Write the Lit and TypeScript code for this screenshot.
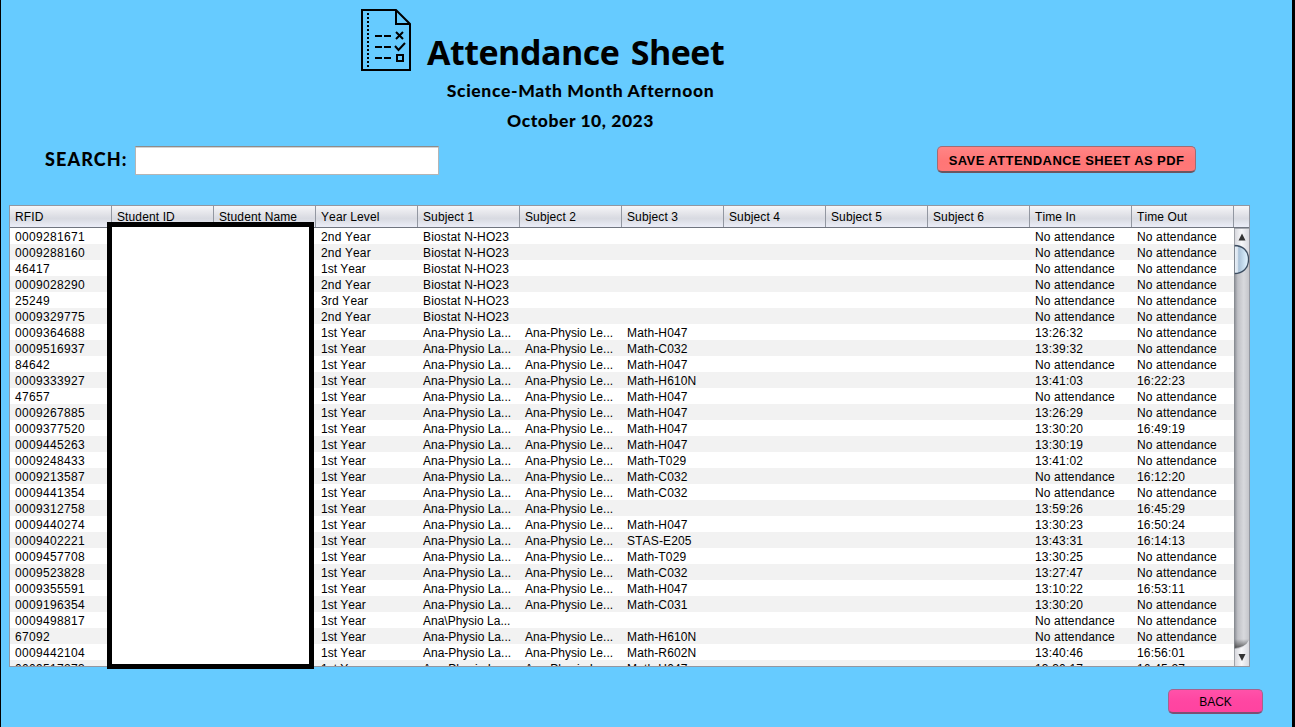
import { LitElement, html, css, svg } from "lit";
import { customElement } from "lit/decorators.js";

const N = "No attendance";
const LA = "Ana-Physio La...";
const LE = "Ana-Physio Le...";
const B = "Biostat N-HO23";

const HEADERS = ["RFID", "Student ID", "Student Name", "Year Level", "Subject 1", "Subject 2", "Subject 3", "Subject 4", "Subject 5", "Subject 6", "Time In", "Time Out"];

// rfid, year, subject 1, subject 2, subject 3, time in, time out
const ROWS: string[][] = [
  ["0009281671", "2nd Year", B, "", "", N, N],
  ["0009288160", "2nd Year", B, "", "", N, N],
  ["46417", "1st Year", B, "", "", N, N],
  ["0009028290", "2nd Year", B, "", "", N, N],
  ["25249", "3rd Year", B, "", "", N, N],
  ["0009329775", "2nd Year", B, "", "", N, N],
  ["0009364688", "1st Year", LA, LE, "Math-H047", "13:26:32", N],
  ["0009516937", "1st Year", LA, LE, "Math-C032", "13:39:32", N],
  ["84642", "1st Year", LA, LE, "Math-H047", N, N],
  ["0009333927", "1st Year", LA, LE, "Math-H610N", "13:41:03", "16:22:23"],
  ["47657", "1st Year", LA, LE, "Math-H047", N, N],
  ["0009267885", "1st Year", LA, LE, "Math-H047", "13:26:29", N],
  ["0009377520", "1st Year", LA, LE, "Math-H047", "13:30:20", "16:49:19"],
  ["0009445263", "1st Year", LA, LE, "Math-H047", "13:30:19", N],
  ["0009248433", "1st Year", LA, LE, "Math-T029", "13:41:02", N],
  ["0009213587", "1st Year", LA, LE, "Math-C032", N, "16:12:20"],
  ["0009441354", "1st Year", LA, LE, "Math-C032", N, N],
  ["0009312758", "1st Year", LA, LE, "", "13:59:26", "16:45:29"],
  ["0009440274", "1st Year", LA, LE, "Math-H047", "13:30:23", "16:50:24"],
  ["0009402221", "1st Year", LA, LE, "STAS-E205", "13:43:31", "16:14:13"],
  ["0009457708", "1st Year", LA, LE, "Math-T029", "13:30:25", N],
  ["0009523828", "1st Year", LA, LE, "Math-C032", "13:27:47", N],
  ["0009355591", "1st Year", LA, LE, "Math-H047", "13:10:22", "16:53:11"],
  ["0009196354", "1st Year", LA, LE, "Math-C031", "13:30:20", N],
  ["0009498817", "1st Year", "Ana\\Physio La...", "", "", N, N],
  ["67092", "1st Year", LA, LE, "Math-H610N", N, N],
  ["0009442104", "1st Year", LA, LE, "Math-R602N", "13:40:46", "16:56:01"],
  ["0009517273", "1st Year", LA, LE, "Math-H047", "13:30:17", "16:45:27"],
];

const kind = (t: string) => (/^\d+$/.test(t) ? "id" : /^\d\d:/.test(t) ? "time" : /^(Ana|1st)/.test(t) ? "" : "word");

@customElement("app-root")
export class AppRoot extends LitElement {
  static styles = css`
    :host { display: block; }
    * { box-sizing: border-box; }
    .page {
      width: 1295px; height: 727px; overflow: hidden; position: relative;
      background: #66cbff; border-left: 1px solid #000; border-right: 3px solid #000;
      font-family: "Liberation Sans", Arial, sans-serif; color: #000;
      display: flex; flex-direction: column;
    }
    .brand { display: flex; height: 76px; padding-left: 359px; }
    .icon { width: 52px; height: 64px; margin-top: 8px; flex: none; }
    h1 {
      margin: 27px 0 0 15px; font: 700 34px/50px "Open Sans", "Noto Sans", sans-serif;
      white-space: nowrap; letter-spacing: -0.5px; word-spacing: 3px;
    }
    .sub {
      font: 900 17.5px/30px Lato, sans-serif; text-align: center; width: 1159px;
      letter-spacing: 0.65px; white-space: nowrap;
    }
    .date { letter-spacing: 0.55px; }
    .tools { display: flex; height: 69px; padding: 10px 0 0 44px; align-items: flex-start; }
    .label { font: 900 18px/26px Lato, sans-serif; width: 90px; letter-spacing: 1.1px; white-space: nowrap; }
    .input {
      width: 304px; height: 29px; background: #fff; border: 1px solid #b5b5b5; border-top-color: #8c8c8c;
      box-shadow: inset 0 1px 0 #d2d2d2;
    }
    button { font-family: inherit; color: #000; padding: 2px 0 0; border-radius: 5px; white-space: nowrap; }
    .save {
      margin-left: 498px; width: 259px; height: 27px; font-weight: 700; font-size: 13px; letter-spacing: 0.42px;
      background: linear-gradient(#ff8585, #ff7676 60%, #ff7878);
      border: 1px solid #a06c74; border-bottom: 2px solid #6a5660;
    }
    .table {
      margin-left: 8px; width: 1241px; height: 462px; border: 1px solid #9297a1; background: #fff;
      font-size: 12px; font-kerning: none; display: flex; flex-direction: column; overflow: hidden;
    }
    .head {
      height: 22px; flex: none; display: grid; grid-template-columns: repeat(12, 102px) 1fr;
      background: linear-gradient(#f6f6f8, #dfe0e6 45%, #d8dae1 60%, #eceef8);
      border-bottom: 1px solid #70757f; line-height: 23px; letter-spacing: 0.12px;
    }
    .head > span { height: 21px; padding-left: 5px; border-right: 1px solid #9297a1; }
    .head > span:last-child { border-right: 0; }
    .view { flex: 1; display: flex; min-height: 0; }
    .rows { width: 1224px; overflow: hidden; }
    .row { display: grid; grid-template-columns: repeat(12, 102px); height: 16px; line-height: 19px; }
    .row:nth-child(even) { background: #f2f2f2; }
    .row > span { padding-left: 5px; white-space: nowrap; }
    .id { letter-spacing: 0.33px; }
    .time { letter-spacing: 0.17px; }
    .word { letter-spacing: 0.14px; }
    .bar { width: 15px; height: 438px; flex: none; }
    .mask {
      position: absolute; left: 106px; top: 222px; width: 207px; height: 447px;
      background: #fff; border: 5px solid #000;
    }
    .foot { padding: 22px 0 0 1167px; }
    .back {
      display: block; width: 95px; height: 25px; font-size: 12px;
      background: linear-gradient(#ff52a9, #ff46a2 50%, #ff43a0);
      border: 1px solid #a4638e; border-bottom: 2px solid #7c5074;
    }
  `;

  private icon() {
    return svg`<svg class="icon" viewBox="0 0 52 64" fill="none" stroke="#000" stroke-width="2">
      <path d="M2 2H36L50 16V62H2Z"/><path d="M36 2V16H50"/>
      <path d="M8 5V60" stroke-dasharray="2 2"/>
      <path d="M15 28H22M24 28H31M15 39H22M24 39H31M15 50H22M24 50H31"/>
      <path d="M36 24L43 31M43 24L36 31M35 38L38.5 42L45 35"/>
      <path d="M37 47H43V53H37Z"/>
    </svg>`;
  }

  private bar() {
    return html`<svg class="bar" viewBox="0 0 15 438">
      <defs>
        <linearGradient id="track"><stop offset="0" stop-color="#85888f"/><stop offset=".25" stop-color="#bfc0c5"/><stop offset=".65" stop-color="#d8d9dd"/><stop offset="1" stop-color="#c5c6cb"/></linearGradient>
        <linearGradient id="thumb"><stop offset="0" stop-color="#f0f5fb"/><stop offset=".28" stop-color="#d5e1ed"/><stop offset=".32" stop-color="#a9c1d7"/><stop offset=".75" stop-color="#d0e5f5"/><stop offset="1" stop-color="#e8f5ff"/></linearGradient>
        <linearGradient id="cap"><stop offset="0" stop-color="#d3d4da"/><stop offset=".5" stop-color="#f7f7f9"/><stop offset="1" stop-color="#d9dae0"/></linearGradient>
        <linearGradient id="shade" x2="0" y2="1"><stop offset="0" stop-color="#444" stop-opacity="0"/><stop offset="1" stop-color="#333" stop-opacity=".75"/></linearGradient>
      </defs>
      <rect width="15" height="438" fill="url(#track)"/>
      <path d="M0 0H15V26Q12 17 0 17Z" fill="url(#cap)"/>
      <path d="M0 .5H15" stroke="#a5a8b0"/>
      <path d="M4.500 12.500L8 5.500L11.500 12.500Z" fill="#333"/>
      <path d="M0 17.500C9 17.500 14.500 23 14.500 31.500S9 45.500 0 45.500Z" fill="url(#thumb)" stroke="#3c4d61" stroke-width="1.300"/>
      <path d="M0 411H15V413Q10 420 0 420Z" fill="url(#shade)"/>
      <path d="M0 438V421Q11 421 15 412V438Z" fill="url(#cap)"/>
      <path d="M4.500 426H11.500L8 433Z" fill="#333"/>
      <path d="M.5 0V438" stroke="#888b92" stroke-opacity=".7"/>
    </svg>`;
  }

  render() {
    return html`<div class="page">
      <div class="brand">${this.icon()}<h1>Attendance Sheet</h1></div>
      <div class="sub">Science-Math Month Afternoon</div>
      <div class="sub date">October 10, 2023</div>
      <div class="tools">
        <span class="label">SEARCH:</span><div class="input"></div>
        <button class="save">SAVE ATTENDANCE SHEET AS PDF</button>
      </div>
      <div class="table">
        <div class="head">${HEADERS.map((h) => html`<span>${h}</span>`)}<span></span></div>
        <div class="view">
          <div class="rows">
            ${ROWS.map(([id, year, s1, s2, s3, tin, tout]) => html`<div class="row">
              ${[id, "", "", year, s1, s2, s3, "", "", "", tin, tout].map((t) => html`<span class=${kind(t)}>${t}</span>`)}
            </div>`)}
          </div>
          ${this.bar()}
        </div>
      </div>
      <div class="foot"><button class="back">BACK</button></div>
      <div class="mask"></div>
    </div>`;
  }
}
